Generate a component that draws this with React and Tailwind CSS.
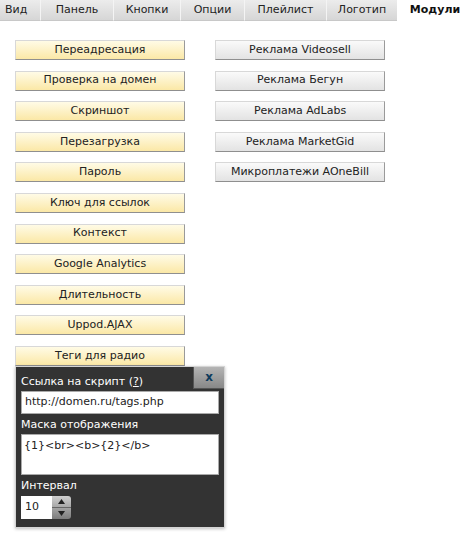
import React from "react";

const tabs = ["Вид", "Панель", "Кнопки", "Опции", "Плейлист", "Логотип"];

const leftButtons = [
  "Переадресация",
  "Проверка на домен",
  "Скриншот",
  "Перезагрузка",
  "Пароль",
  "Ключ для ссылок",
  "Контекст",
  "Google Analytics",
  "Длительность",
  "Uppod.AJAX",
  "Теги для радио",
];

const rightButtons = [
  "Реклама Videosell",
  "Реклама Бегун",
  "Реклама AdLabs",
  "Реклама MarketGid",
  "Микроплатежи AOneBill",
];

const Btn = ({ label, yellow }) => (
  <div
    className={`h-[20px] w-[170px] flex items-center justify-center text-[11px] text-[#222] border border-t-[#d8d8d8] border-l-[#d8d8d8] border-r-[#9a9a9a] border-b-[#8f8f8f] ${
      yellow
        ? "bg-gradient-to-b from-[#fffbe6] to-[#fbe8a6]"
        : "bg-gradient-to-b from-[#fafafa] to-[#e3e3e3]"
    }`}
  >
    {label}
  </div>
);

export default function App() {
  return (
    <div className="w-[473px] h-[545px] bg-white font-['DejaVu_Sans',sans-serif] text-[11px] overflow-hidden">
      <div className="flex h-[21px]">
        {tabs.map((t, i) => (
          <div
            key={t}
            className={`h-full flex items-center border-b border-[#c8c8c8] bg-gradient-to-b from-[#ececec] to-[#d6d6d6] text-[#222] ${
              i > 0 ? "justify-center border-l border-l-[#f4f4f4]" : "justify-start pl-[5px]"
            } ${
              ["w-[40px]", "w-[73px]", "w-[67px]", "w-[64px]", "w-[82px]", "w-[71px]"][i]
            }`}
          >
            {t}
          </div>
        ))}
        <div className="flex-1 h-full flex items-center justify-center font-bold text-[#111] bg-white">
          Модули
        </div>
      </div>

      <div className="flex gap-[30px] pl-[15px] pt-[19px]">
        <div className="flex flex-col w-[170px]">
          <div className="flex flex-col gap-[10.6px]">
            {leftButtons.map((b) => (
              <Btn key={b} label={b} yellow />
            ))}
          </div>
          <div className="relative w-[210px] shrink-0 bg-[#333] border border-[#d4d4d4] shadow-[0_1px_3px_rgba(0,0,0,0.25)] px-[5px] pt-[6px] pb-[8px] text-white">
            <div className="absolute top-0 right-0 w-[31px] h-[22px] bg-gradient-to-b from-[#b4b4b4] to-[#888] border-l border-b border-[#555] flex items-center justify-center text-[#0d3a5c] font-bold text-[12px]">
              x
            </div>
            <div className="h-[18px] leading-[18px]">
              Ссылка на скрипт (<span className="underline">?</span>)
            </div>
            <div className="h-[23px] bg-white border border-[#aaa] text-[#222] px-[3px] flex items-center">
              http://domen.ru/tags.php
            </div>
            <div className="h-[18px] leading-[18px] mt-[2px]">Маска отображения</div>
            <div className="h-[41px] bg-white border border-[#aaa] text-[#222] px-[2px] pt-[3px] text-[11px]">
              {"{1}<br><b>{2}</b>"}
            </div>
            <div className="h-[18px] leading-[18px] mt-[2px]">Интервал</div>
            <div className="flex h-[23px] w-[50px] mt-[1px]">
              <div className="w-[31px] bg-white text-[#222] flex items-center pl-[4px]">10</div>
              <div className="flex-1 flex flex-col rounded-r-[3px] overflow-hidden bg-gradient-to-b from-[#d0d0d0] to-[#7d7d7d]">
                <div className="flex-1 flex items-center justify-center border-b border-[#666]">
                  <svg width="7" height="5" viewBox="0 0 7 5">
                    <path d="M0 5 L3.5 0 L7 5 Z" fill="#222" />
                  </svg>
                </div>
                <div className="flex-1 flex items-center justify-center">
                  <svg width="7" height="5" viewBox="0 0 7 5">
                    <path d="M0 0 L3.5 5 L7 0 Z" fill="#222" />
                  </svg>
                </div>
              </div>
            </div>
          </div>
        </div>
        <div className="flex flex-col gap-[10.6px]">
          {rightButtons.map((b) => (
            <Btn key={b} label={b} />
          ))}
        </div>
      </div>
    </div>
  );
}
